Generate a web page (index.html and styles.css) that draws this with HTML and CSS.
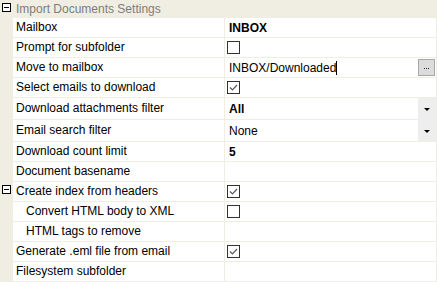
FILE: index.html
```html
<!DOCTYPE html>
<html>
<head>
<meta charset="utf-8">
<link rel="stylesheet" href="styles.css">
</head>
<body>
<div class="grid">
  <div class="cat">
    <div class="gut"><span class="exp"></span></div>
    <div class="cat-name">Import Documents Settings</div>
  </div>

  <div class="row">
    <div class="gut"></div>
    <div class="name">Mailbox</div>
    <div class="val bold">INBOX</div>
  </div>
  <div class="row">
    <div class="gut"></div>
    <div class="name">Prompt for subfolder</div>
    <div class="val"><span class="cb"></span></div>
  </div>
  <div class="row">
    <div class="gut"></div>
    <div class="name">Move to mailbox</div>
    <div class="val edit"><span class="txt">INBOX/Downloaded</span><span class="caret"></span><span class="fill"></span><span class="btn"><i></i><i></i><i></i></span></div>
  </div>
  <div class="row">
    <div class="gut"></div>
    <div class="name">Select emails to download</div>
    <div class="val"><span class="cb checked"><svg viewBox="0 0 11 11" width="11" height="11"><path d="M2 5.5 L4.5 8 L9 3" fill="none" stroke="#5a5a5a" stroke-width="1.2"/></svg></span></div>
  </div>
  <div class="row tall">
    <div class="gut"></div>
    <div class="name">Download attachments filter</div>
    <div class="val"><span class="txt bold">All</span><span class="fill"></span><span class="dd"><span class="arrow"></span></span></div>
  </div>
  <div class="row tall">
    <div class="gut"></div>
    <div class="name">Email search filter</div>
    <div class="val"><span class="txt">None</span><span class="fill"></span><span class="dd"><span class="arrow"></span></span></div>
  </div>
  <div class="row">
    <div class="gut"></div>
    <div class="name">Download count limit</div>
    <div class="val bold">5</div>
  </div>
  <div class="row">
    <div class="gut"></div>
    <div class="name">Document basename</div>
    <div class="val"></div>
  </div>
  <div class="row">
    <div class="gut"><span class="exp"></span></div>
    <div class="name">Create index from headers</div>
    <div class="val"><span class="cb checked"><svg viewBox="0 0 11 11" width="11" height="11"><path d="M2 5.5 L4.5 8 L9 3" fill="none" stroke="#5a5a5a" stroke-width="1.2"/></svg></span></div>
  </div>
  <div class="row">
    <div class="gut"></div>
    <div class="name sub">Convert HTML body to XML</div>
    <div class="val"><span class="cb"></span></div>
  </div>
  <div class="row">
    <div class="gut"></div>
    <div class="name sub">HTML tags to remove</div>
    <div class="val"></div>
  </div>
  <div class="row">
    <div class="gut"></div>
    <div class="name">Generate .eml file from email</div>
    <div class="val"><span class="cb checked"><svg viewBox="0 0 11 11" width="11" height="11"><path d="M2 5.5 L4.5 8 L9 3" fill="none" stroke="#5a5a5a" stroke-width="1.2"/></svg></span></div>
  </div>
  <div class="row">
    <div class="gut"></div>
    <div class="name">Filesystem subfolder</div>
    <div class="val"></div>
  </div>
</div>
</body>
</html>
```

FILE: styles.css
```css
html, body {
  margin: 0;
  padding: 0;
  background: #ffffff;
}
body {
  font-family: "Liberation Sans", Arial, sans-serif;
  font-size: 12px;
  color: #000;
}
.grid {
  width: 437px;
  height: 282px;
  background: #f0ede2;
  display: flex;
  flex-direction: column;
}
.cat {
  height: 18px;
  display: flex;
  align-items: stretch;
  background: #f0ede2;
}
.cat-name {
  color: #7d7d7d;
  line-height: 18px;
  padding-left: 3px;
}
.gut {
  width: 13px;
  flex: none;
  background: #f0ede2;
  position: relative;
}
.exp {
  position: absolute;
  left: 2px;
  top: 3px;
  width: 7px;
  height: 7px;
  border: 1px solid #000;
  background: #fff;
}
.exp::after {
  content: "";
  position: absolute;
  left: 1px;
  top: 3px;
  width: 5px;
  height: 1px;
  background: #000;
}
.row {
  height: 19px;
  display: flex;
  border-bottom: 1px solid #f0ede2;
}
.row.tall {
  height: 21px;
}
.name {
  width: 208px;
  flex: none;
  background: #fff;
  padding-left: 3px;
  border-right: 1px solid #f0ede2;
  line-height: 19px;
  white-space: nowrap;
}
.tall .name {
  line-height: 21px;
}
.name.sub {
  padding-left: 13px;
  width: 198px;
}
.val {
  flex: 1;
  background: #fff;
  margin-right: 1px;
  display: flex;
  align-items: center;
  padding-left: 4px;
  white-space: nowrap;
}
.bold {
  font-weight: bold;
}
.cb {
  width: 11px;
  height: 11px;
  border: 1px solid #333;
  margin-left: -2px;
  display: flex;
  align-items: center;
  justify-content: center;
  background: #fff;
}
.cb svg {
  display: block;
}
.caret {
  width: 1px;
  height: 14px;
  background: #000;
}
.fill {
  flex: 1;
}
.btn {
  width: 15px;
  height: 15px;
  background: #dcdcdc;
  border: 1px solid #a8a8a8;
  margin-right: 1px;
  display: flex;
  justify-content: center;
  align-items: flex-end;
  gap: 1px;
  padding-bottom: 0;
  box-sizing: content-box;
}
.btn i {
  width: 1px;
  height: 1px;
  background: #333;
  margin-bottom: 6px;
}
.dd {
  width: 18px;
  align-self: stretch;
  background: #eeeeee;
  display: flex;
  align-items: center;
  justify-content: center;
}
.arrow {
  width: 0;
  height: 0;
  border-left: 3px solid transparent;
  border-right: 3px solid transparent;
  border-top: 3px solid #000;
  margin-top: 2px;
}
```
